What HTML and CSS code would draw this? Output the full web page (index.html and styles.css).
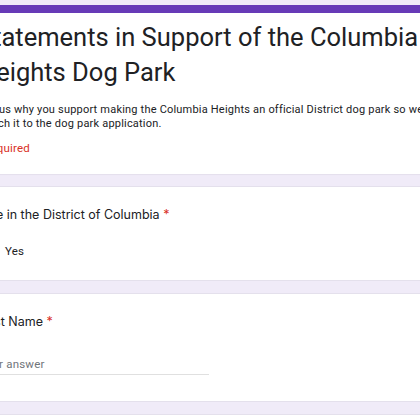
FILE: index.html
```html
<!DOCTYPE html>
<html>
<head>
<meta charset="utf-8">
<link rel="stylesheet" href="styles.css">
</head>
<body>
<div class="page">
  <div class="card header">
    <div class="bar"></div>
    <div class="head-body">
      <h1 class="title">Statements in Support of the Columbia Heights Dog Park</h1>
      <p class="desc">Tell us why you support making the Columbia Heights an official District dog park so we can attach it to the dog park application.</p>
      <div class="req">*Required</div>
    </div>
  </div>
  <div class="card q q1">
    <div class="q-title">Live in the District of Columbia <span class="star">*</span></div>
    <label class="opt"><span class="radio"></span><span class="opt-label">Yes</span></label>
  </div>
  <div class="card q q2">
    <div class="q-title">First Name <span class="star">*</span></div>
    <div class="input">Your answer</div>
  </div>
  <div class="card q">
    <div class="q-title">Last Name <span class="star">*</span></div>
  </div>
</div>
</body>
</html>
```
FILE: styles.css
```css
html, body {
  margin: 0;
  padding: 0;
}
body {
  background: #f0ebf8;
  overflow: hidden;
  font-family: Roboto, "Liberation Sans", sans-serif;
  color: #202124;
  height: 420px;
}
.page {
  margin-left: -41px;
  width: 510px;
  padding-top: 5px;
  display: flex;
  flex-direction: column;
  gap: 12px;
}
.card {
  background: #fff;
  border: 1px solid #e4e0ec;
  border-radius: 7px;
  box-sizing: border-box;
}
.header {
  border: none;
  overflow: hidden;
  box-shadow: 0 1px 1px rgba(0,0,0,0.05);
}
.bar {
  height: 8px;
  background: #673ab7;
}
.head-body {
  padding: 7px 19px 18px 19px;
}
.title {
  margin: 0;
  font-family: Roboto, sans-serif;
  font-weight: 400;
  font-size: 25.5px;
  line-height: 35px;
  color: #202124;
}
.desc {
  margin: 13px 0 0 0;
  font-size: 11px;
  line-height: 14px;
  letter-spacing: 0.2px;
}
.req {
  margin-top: 10px;
  font-size: 11.5px;
  line-height: 14.5px;
  letter-spacing: 0.2px;
  color: #d93025;
}
.q {
  padding: 19px 19px 21px 19px;
}
.q-title {
  font-family: Inter, Roboto, sans-serif;
  font-size: 12.5px;
  line-height: 17px;
}
.star {
  color: #d93025;
}
.opt {
  margin-top: 20px;
  display: flex;
  align-items: center;
  gap: 10px;
  font-size: 11.5px;
  line-height: 16px;
  letter-spacing: 0.2px;
}
.radio {
  width: 16px;
  height: 16px;
  box-sizing: border-box;
  border: 2px solid #5f6368;
  border-radius: 50%;
}
.q2 {
  padding-top: 19px;
  padding-bottom: 26px;
}
.input {
  margin-top: 26px;
  width: 230px;
  font-size: 11.5px;
  line-height: 16px;
  letter-spacing: 0.2px;
  color: #70757a;
  padding-bottom: 2px;
  border-bottom: 1px solid #e0e0e0;
}
```
